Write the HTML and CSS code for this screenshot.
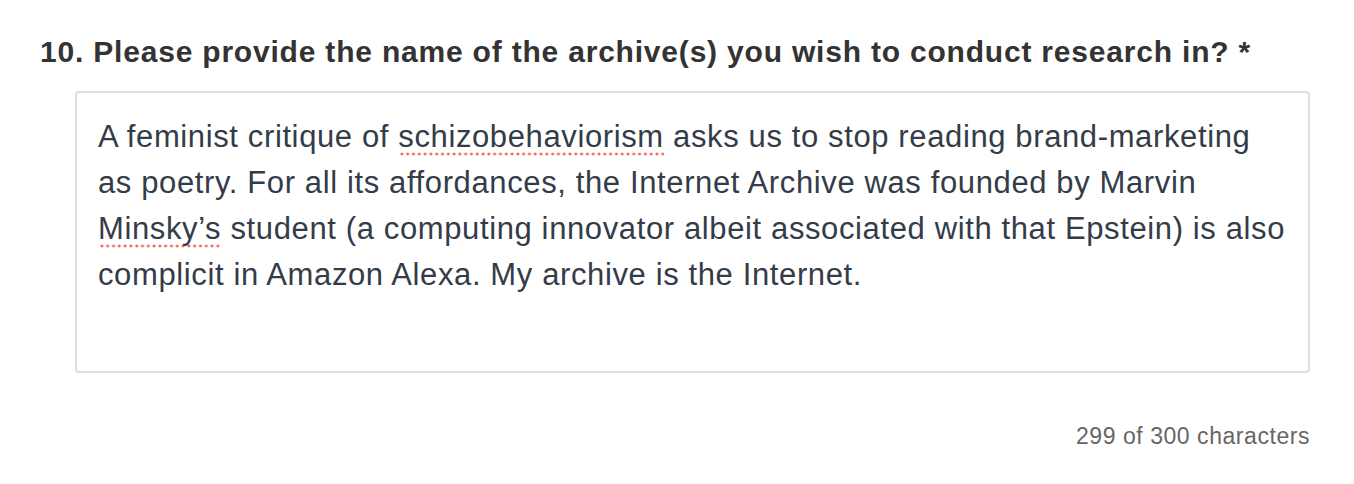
FILE: index.html
```html
<!DOCTYPE html>
<html>
<head>
    <title>Research application</title>
    <link rel="stylesheet" href="styles.css">
</head>
<body>
    <div class="question">
        <h2 class="question-title">10. Please provide the name of the archive(s) you wish to conduct research in? *</h2>
        <div class="answer">
            <div class="answer-box">A feminist critique of <span class="misspelled">schizobehaviorism</span> asks us to stop reading brand-marketing as poetry. For all its affordances, the Internet Archive was founded by Marvin <span class="misspelled">Minsky’s</span> student (a computing innovator albeit associated with that Epstein) is also complicit in Amazon Alexa. My archive is the Internet.</div>
            <div class="counter">299 of 300 characters</div>
        </div>
    </div>
</body>
</html>
```

FILE: styles.css
```css
body {
    font-family: "Liberation Sans", Arial, sans-serif;
    margin: 0;
    padding: 0;
    background-color: #fff;
}
.question {
    padding: 34px 0 0 40px;
    width: 1270px;
}
.question-title {
    font-size: 30px;
    font-weight: bold;
    letter-spacing: 0.8px;
    color: #333;
    margin: 0;
    line-height: 36px;
    white-space: nowrap;
}
.answer {
    margin-left: 35px;
    margin-top: 21px;
}
.answer-box {
    border: 2px solid #dcdfe4;
    border-radius: 4px;
    padding: 21px 15px 0 21px;
    height: 257px;
    font-size: 31px;
    letter-spacing: 0.62px;
    line-height: 46px;
    color: #333c48;
}
.misspelled {
    padding-bottom: 4px;
    background-image: radial-gradient(circle, #f0675b 1.3px, transparent 1.7px);
    background-size: 5.8px 4px;
    background-repeat: repeat-x;
    background-position: 1px 32.5px;
}
.counter {
    text-align: right;
    font-size: 23px;
    letter-spacing: 0.55px;
    line-height: 26px;
    color: #666;
    margin-top: 50px;
}
```
